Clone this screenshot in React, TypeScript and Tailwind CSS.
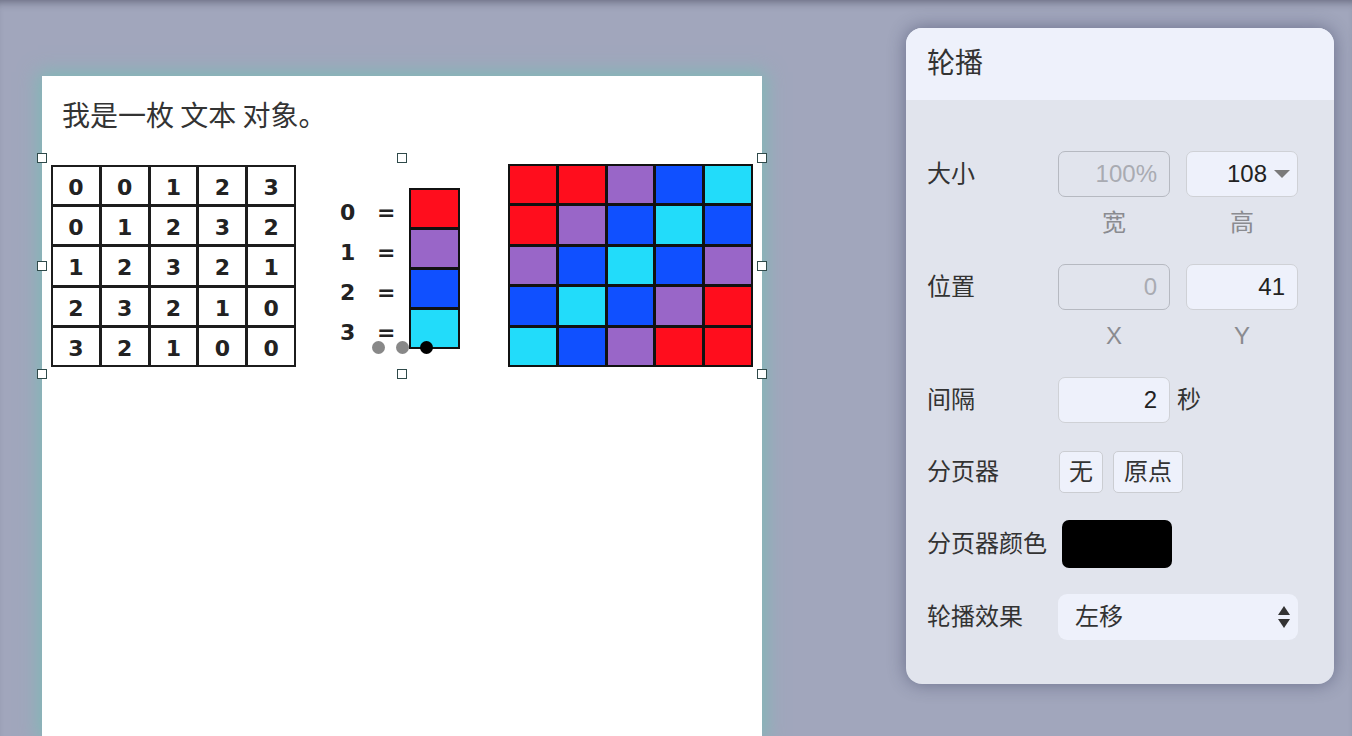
import React from "react";

const COLORS = ["#ff0d1d", "#9966c8", "#1050ff", "#22dcfa"];
const GRID = [
  [0, 0, 1, 2, 3],
  [0, 1, 2, 3, 2],
  [1, 2, 3, 2, 1],
  [2, 3, 2, 1, 0],
  [3, 2, 1, 0, 0],
];

function Handle({ x, y }: { x: string; y: string }) {
  return (
    <div
      className={`absolute ${x} ${y} w-[10px] h-[10px] border-[1.5px] border-[#2f4a4a] bg-white`}
    />
  );
}

function NumberGrid() {
  return (
    <div className="w-[245px] h-[202px] bg-[#1c1c1c] p-[2px] grid grid-cols-5 grid-rows-5 gap-[3px]">
      {GRID.flat().map((n, i) => (
        <div
          key={i}
          className="bg-white flex items-center justify-center pt-[5px] text-[22px] font-bold text-[#222] font-['DejaVu_Sans',sans-serif] leading-none"
        >
          {n}
        </div>
      ))}
    </div>
  );
}

function ColorGrid() {
  return (
    <div className="w-[245px] h-[203px] bg-[#111] p-[2px] grid grid-cols-5 grid-rows-5 gap-[3px]">
      {GRID.flat().map((n, i) => (
        <div key={i} style={{ backgroundColor: COLORS[n] }} />
      ))}
    </div>
  );
}

function Legend() {
  return (
    <div className="flex">
      <div className="mt-[28px] flex flex-col w-[69px]">
        {[0, 1, 2, 3].map((n) => (
          <div
            key={n}
            className="h-[40px] flex items-center text-[22px] font-bold text-[#222] font-['DejaVu_Sans',sans-serif] leading-none"
          >
            <span className="w-[37px]">{n}</span>
            <span>=</span>
          </div>
        ))}
      </div>
      <div className="mt-[23px] w-[51px] h-[161px] bg-[#111] p-[2px] flex flex-col gap-[3px]">
        {COLORS.map((c) => (
          <div key={c} className="flex-1" style={{ backgroundColor: c }} />
        ))}
      </div>
    </div>
  );
}

function Input({
  value,
  disabled,
  caret,
}: {
  value: string;
  disabled?: boolean;
  caret?: boolean;
}) {
  return (
    <div
      className={`w-[112px] h-[46px] rounded-[7px] border-[1.5px] flex items-center justify-end text-[24px] ${
        disabled
          ? "bg-[#e1e4ed] border-[#b6b9c1] text-[#a9abb2]"
          : "bg-[#eef1fb] border-[#cfd1d6] text-[#222]"
      } ${caret ? "pr-[7px]" : "pr-[12px]"}`}
    >
      <span>{value}</span>
      {caret && (
        <svg width="16" height="8" viewBox="0 0 16 8" className="ml-[7px]">
          <polygon points="0,0 16,0 8,8" fill="#7a7a7a" />
        </svg>
      )}
    </div>
  );
}

function Label({ children }: { children: React.ReactNode }) {
  return <div className="w-[131px] text-[24px] text-[#333]">{children}</div>;
}

export default function App() {
  return (
    <div className="w-[1352px] h-[736px] overflow-hidden bg-[#a1a6bc] shadow-[inset_0_8px_8px_-6px_rgba(30,30,50,0.45)] flex items-start font-['Liberation_Sans','Noto_Sans_CJK_SC',sans-serif]">
      {/* Canvas page */}
      <div className="ml-[42px] mt-[76px] w-[720px] h-[660px] bg-white shadow-[0_0_18px_4px_#7fb9b6] flex flex-col">
        <div className="mt-[18px] pl-[20px] h-[40px] leading-[40px] text-[28px] text-[#333] font-['Noto_Sans_CJK_SC',sans-serif] whitespace-pre">
          我是一枚 文本 对象。
        </div>
        <div className="mt-[24px] relative w-[720px] h-[216px]">
          <div className="flex pl-[9px] pt-[7px]">
            <NumberGrid />
            <div className="ml-[44px]">
              <Legend />
            </div>
            <div className="ml-[48px] -mt-[1px]">
              <ColorGrid />
            </div>
          </div>
          {/* pagination dots */}
          <div className="absolute left-0 right-0 top-[183px] flex justify-center gap-[11px]">
            <div className="w-[13px] h-[13px] rounded-full bg-[#888]" />
            <div className="w-[13px] h-[13px] rounded-full bg-[#888]" />
            <div className="w-[13px] h-[13px] rounded-full bg-black" />
          </div>
          <Handle x="-left-[5px]" y="-top-[5px]" />
          <Handle x="left-[355px]" y="-top-[5px]" />
          <Handle x="left-[715px]" y="-top-[5px]" />
          <Handle x="-left-[5px]" y="top-[103px]" />
          <Handle x="left-[715px]" y="top-[103px]" />
          <Handle x="-left-[5px]" y="top-[211px]" />
          <Handle x="left-[355px]" y="top-[211px]" />
          <Handle x="left-[715px]" y="top-[211px]" />
        </div>
      </div>

      {/* Properties panel */}
      <div className="ml-[144px] mt-[28px] w-[428px] h-[656px] rounded-[16px] overflow-hidden bg-[#e1e4ed] shadow-[0_0_18px_rgba(40,44,80,0.45)] text-[#333]">
        <div className="h-[72px] bg-[#eef1fb] flex items-center pl-[21px] text-[28px]">
          轮播
        </div>
        <div className="pl-[21px] pt-[51px]">
          {/* 大小 */}
          <div className="flex items-center h-[46px]">
            <Label>大小</Label>
            <div className="flex gap-[16px]">
              <Input value="100%" disabled />
              <Input value="108" caret />
            </div>
          </div>
          <div className="flex h-[28px] mt-[12px] pl-[131px] gap-[16px] items-center text-[24px] text-[#8a8b90]">
            <div className="w-[112px] text-center">宽</div>
            <div className="w-[112px] text-center">高</div>
          </div>

          {/* 位置 */}
          <div className="flex items-center h-[46px] mt-[27px]">
            <Label>位置</Label>
            <div className="flex gap-[16px]">
              <Input value="0" disabled />
              <Input value="41" />
            </div>
          </div>
          <div className="flex h-[28px] mt-[12px] pl-[131px] gap-[16px] items-center text-[24px] text-[#8a8b90]">
            <div className="w-[112px] text-center">X</div>
            <div className="w-[112px] text-center">Y</div>
          </div>

          {/* 间隔 */}
          <div className="flex items-center h-[46px] mt-[27px]">
            <Label>间隔</Label>
            <Input value="2" />
            <div className="ml-[7px] text-[24px]">秒</div>
          </div>

          {/* 分页器 */}
          <div className="flex items-center h-[42px] mt-[28px]">
            <Label>分页器</Label>
            <div className="flex gap-[10px] ml-[1px]">
              <div className="w-[44px] h-[42px] rounded-[5px] border-[1.5px] border-[#cbcdd2] bg-[#eef1fb] flex items-center justify-center text-[24px]">
                无
              </div>
              <div className="w-[70px] h-[42px] rounded-[5px] border-[1.5px] border-[#cbcdd2] bg-[#eef1fb] flex items-center justify-center text-[24px]">
                原点
              </div>
            </div>
          </div>

          {/* 分页器颜色 */}
          <div className="flex items-center h-[48px] mt-[27px]">
            <Label>分页器颜色</Label>
            <div className="ml-[4px] w-[110px] h-[48px] rounded-[7px] bg-black" />
          </div>

          {/* 轮播效果 */}
          <div className="flex items-center h-[46px] mt-[26px]">
            <Label>轮播效果</Label>
            <div className="w-[240px] h-[46px] rounded-[9px] bg-[#eef1fb] flex items-center justify-between pl-[17px] pr-[8px] text-[24px]">
              <span>左移</span>
              <svg width="12" height="22" viewBox="0 0 12 22">
                <polygon points="6,0 12,9 0,9" fill="#333" />
                <polygon points="0,13 12,13 6,22" fill="#333" />
              </svg>
            </div>
          </div>
        </div>
      </div>
    </div>
  );
}
